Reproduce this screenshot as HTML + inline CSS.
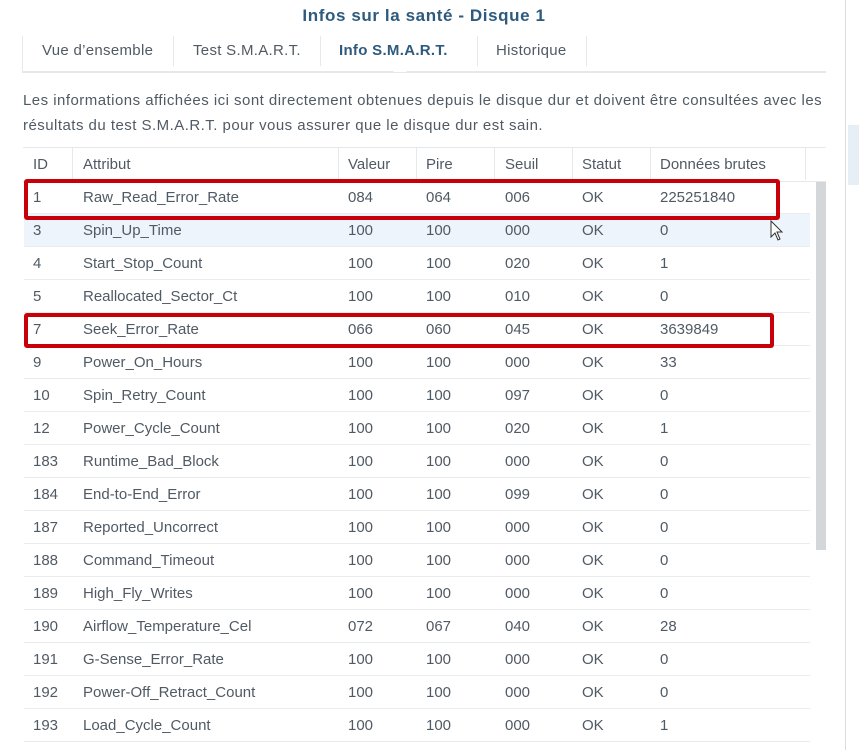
<!DOCTYPE html><html><head><meta charset="utf-8"><style>
body{margin:0;width:859px;height:750px;background:#fff;font-family:"Liberation Sans",sans-serif;color:#505a64;position:relative;overflow:hidden;font-size:15px}
.a{position:absolute;white-space:nowrap}
.row{position:absolute;left:24px;width:786px;height:32px;border-bottom:1px solid #eaecee}
.row span{position:absolute;top:8px}
</style></head><body>
<div class="a" style="left:0;top:0;width:845px;height:750px;border-right:1px solid #d8dde2;background:#fff"></div>
<div class="a" style="left:848px;top:125px;width:11px;height:60px;background:#e6eef6"></div>
<div class="a" style="left:0;top:6px;width:848px;text-align:center;font-size:17px;letter-spacing:0.6px;font-weight:bold;color:#2e5a7e">Infos sur la santé - Disque 1</div>
<div class="a" style="left:22px;top:36px;width:804px;height:35px;border-bottom:2px solid #e6e9ec"></div>
<div class="a" style="left:22px;top:36px;width:1px;height:35px;background:#e6e9ec"></div>
<div class="a" style="left:42px;top:42px;letter-spacing:0.3px">Vue d’ensemble</div>
<div class="a" style="left:173px;top:36px;width:1px;height:30px;background:#e6e9ec"></div>
<div class="a" style="left:193px;top:42px;letter-spacing:0.3px">Test S.M.A.R.T.</div>
<div class="a" style="left:320px;top:36px;width:1px;height:30px;background:#e6e9ec"></div>
<div class="a" style="left:339px;top:42px;font-weight:bold;color:#2e5a7e;letter-spacing:0.3px">Info S.M.A.R.T.</div>
<div class="a" style="left:477px;top:36px;width:1px;height:30px;background:#e6e9ec"></div>
<div class="a" style="left:496px;top:42px;letter-spacing:0.3px">Historique</div>
<div class="a" style="left:586px;top:36px;width:1px;height:30px;background:#e6e9ec"></div>
<div class="a" style="left:393px;top:66px;width:0;height:0;border-left:7px solid transparent;border-right:7px solid transparent;border-bottom:6px solid #fff"></div>
<div class="a" style="left:23px;top:88px;line-height:25px;font-size:15px;letter-spacing:0.47px">Les informations affichées ici sont directement obtenues depuis le disque dur et doivent être consultées avec les<br>résultats du test S.M.A.R.T. pour vous assurer que le disque dur est sain.</div>
<div class="a" style="left:23px;top:147px;width:803px;height:33px;border-top:1px solid #e6e9ec;border-bottom:1px solid #e6e9ec"></div>
<div class="a" style="left:72px;top:148px;width:1px;height:32px;background:#e6e9ec"></div>
<div class="a" style="left:338px;top:148px;width:1px;height:32px;background:#e6e9ec"></div>
<div class="a" style="left:416px;top:148px;width:1px;height:32px;background:#e6e9ec"></div>
<div class="a" style="left:494px;top:148px;width:1px;height:32px;background:#e6e9ec"></div>
<div class="a" style="left:572px;top:148px;width:1px;height:32px;background:#e6e9ec"></div>
<div class="a" style="left:650px;top:148px;width:1px;height:32px;background:#e6e9ec"></div>
<div class="a" style="left:805px;top:148px;width:1px;height:32px;background:#e6e9ec"></div>
<div class="a" style="left:33px;top:156px">ID</div><div class="a" style="left:83px;top:156px">Attribut</div><div class="a" style="left:348px;top:156px">Valeur</div><div class="a" style="left:426px;top:156px">Pire</div><div class="a" style="left:505px;top:156px">Seuil</div><div class="a" style="left:582px;top:156px">Statut</div><div class="a" style="left:660px;top:156px">Données brutes</div>
<div class="a" style="left:816px;top:182px;width:10px;height:368px;background:#d4d7da"></div>
<div id="rows"></div>
<script>
var d=[["1","Raw_Read_Error_Rate","084","064","006","225251840"],["3","Spin_Up_Time","100","100","000","0"],["4","Start_Stop_Count","100","100","020","1"],["5","Reallocated_Sector_Ct","100","100","010","0"],["7","Seek_Error_Rate","066","060","045","3639849"],["9","Power_On_Hours","100","100","000","33"],["10","Spin_Retry_Count","100","100","097","0"],["12","Power_Cycle_Count","100","100","020","1"],["183","Runtime_Bad_Block","100","100","000","0"],["184","End-to-End_Error","100","100","099","0"],["187","Reported_Uncorrect","100","100","000","0"],["188","Command_Timeout","100","100","000","0"],["189","High_Fly_Writes","100","100","000","0"],["190","Airflow_Temperature_Cel","072","067","040","28"],["191","G-Sense_Error_Rate","100","100","000","0"],["192","Power-Off_Retract_Count","100","100","000","0"],["193","Load_Cycle_Count","100","100","000","1"]];
var h="";d.forEach(function(r,i){h+='<div class="row" style="top:'+(181+33*i)+'px;'+(i==1?'background:#eef4fb':'')+'"><span style="left:9px">'+r[0]+'</span><span style="left:59px">'+r[1]+'</span><span style="left:324px">'+r[2]+'</span><span style="left:402px">'+r[3]+'</span><span style="left:481px">'+r[4]+'</span><span style="left:558px">OK</span><span style="left:636px">'+r[5]+'</span></div>';});
document.getElementById("rows").innerHTML=h;
</script>
<div class="a" style="left:24px;top:179px;width:748px;height:33px;border:4px solid #c8000a;border-radius:3px"></div>
<div class="a" style="left:24px;top:313px;width:742px;height:27px;border:4px solid #c8000a;border-radius:3px"></div>
<svg class="a" style="left:770px;top:220px" width="16" height="22" viewBox="0 0 16 22"><path d="M1 1 L1 17 L5 13 L8 20 L10 19 L7 12 L12 12 Z" fill="#fff" stroke="#333" stroke-width="1"/></svg>
</body></html>
